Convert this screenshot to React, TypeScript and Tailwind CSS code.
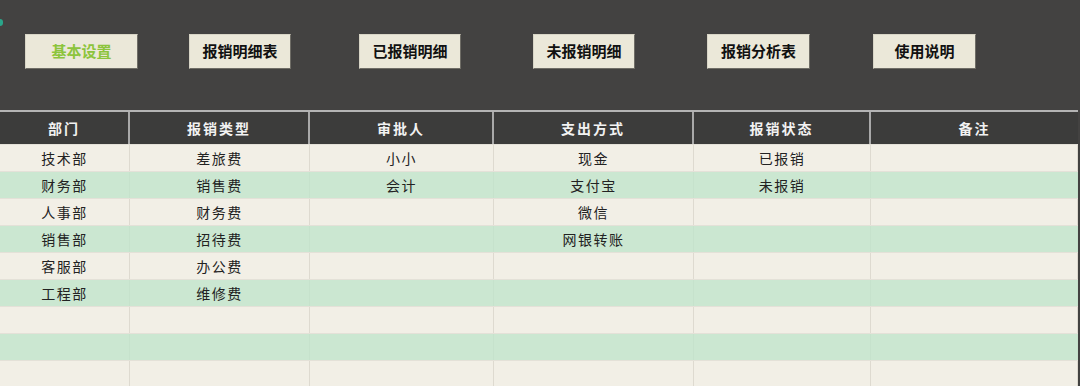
const font = { fontFamily: '"Noto Sans CJK SC", "Noto Sans", sans-serif' };

const buttons = [
  { label: "基本设置", ml: "ml-[25px]", w: "w-[113px]", active: true },
  { label: "报销明细表", ml: "ml-[51px]", w: "w-[102px]" },
  { label: "已报销明细", ml: "ml-[68px]", w: "w-[102px]" },
  { label: "未报销明细", ml: "ml-[72px]", w: "w-[102px]" },
  { label: "报销分析表", ml: "ml-[72px]", w: "w-[103px]" },
  { label: "使用说明", ml: "ml-[63px]", w: "w-[103px]" },
];

const headers = ["部门", "报销类型", "审批人", "支出方式", "报销状态", "备注"];

const rows = [
  ["技术部", "差旅费", "小小", "现金", "已报销", ""],
  ["财务部", "销售费", "会计", "支付宝", "未报销", ""],
  ["人事部", "财务费", "", "微信", "", ""],
  ["销售部", "招待费", "", "网银转账", "", ""],
  ["客服部", "办公费", "", "", "", ""],
  ["工程部", "维修费", "", "", "", ""],
  ["", "", "", "", "", ""],
  ["", "", "", "", "", ""],
  ["", "", "", "", "", ""],
];

const cols = "grid grid-cols-[130px_180px_184px_200px_177px_1fr]";

export default function App() {
  return (
    <div className="relative h-[386px] w-[1080px] overflow-hidden bg-[#434241]" style={font}>
      <span className="absolute left-[-3px] top-[19px] h-[7px] w-[6px] rounded-full bg-[#2aa58a]" />
      <div className="flex h-[110px] items-start pt-[34px]">
        {buttons.map((b) => (
          <button
            key={b.label}
            className={`${b.ml} ${b.w} h-[35px] border border-t-[#d8d5c6] border-l-[#d8d5c6] border-r-[#6f6d66] border-b-[#6f6d66] bg-[#ebe8d9] text-[15px] font-bold ${b.active ? "text-[#8cc43c]" : "text-[#111]"}`}
          >
            {b.label}
          </button>
        ))}
      </div>
      <div className="w-[1078px] border-t-2 border-[#b4b4b4]">
        <div className={`${cols} h-[32px] bg-[#3c3c3b]`}>
          {headers.map((h) => (
            <div
              key={h}
              className="flex items-center justify-center border-r-2 border-[#a9a9a9] text-[14px] font-bold tracking-[2px] text-[#f2f2f2] last:border-r-0"
            >
              {h}
            </div>
          ))}
        </div>
        {rows.map((r, i) => (
          <div
            key={i}
            className={`${cols} h-[27px] border-t border-[#e4e1d8] ${i % 2 === 0 ? "bg-[#f2efe6]" : "bg-[#cbe7d1] border-[#d6eadb]"}`}
          >
            {r.map((c, j) => (
              <div
                key={j}
                className={`flex items-center justify-center border-r text-[14px] tracking-[1.5px] text-[#222] ${i % 2 === 0 ? "border-[#dedad0]" : "border-[#c6e2cc]"}`}
              >
                {c}
              </div>
            ))}
          </div>
        ))}
      </div>
    </div>
  );
}
